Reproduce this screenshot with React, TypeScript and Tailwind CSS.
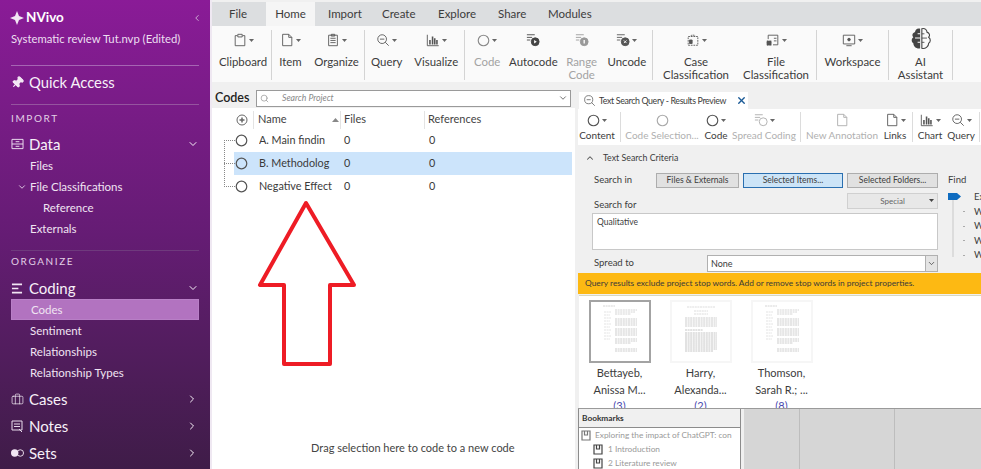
import React from "react";
import { ChevronDown, ChevronRight, ChevronLeft, ChevronUp, Pin, X, Search, Briefcase } from "lucide-react";

const G = ({ w = 14, h = 14, vb = "0 0 16 16", c = "#555", children, sw = 1 }: any) => (
  <svg width={w} height={h} viewBox={vb} fill="none" stroke={c} strokeWidth={sw} className="shrink-0">{children}</svg>
);
const Caret = ({ c = "#666" }: any) => (
  <svg width="5" height="3" viewBox="0 0 5 3" className="ml-[2px] shrink-0"><path d="M0 0h5L2.5 3z" fill={c} /></svg>
);
const ClipIcon = ({ c = "#555" }: any) => <G c={c}><path d="M5 3H2.500v11.500h11V3H11M5.500 1.500h5V4.500h-5z" /></G>;
const FileIcon = ({ c = "#555" }: any) => <G c={c}><path d="M3 1.500h7l3.500 3.500v9.500H3zM10 1.500V5h3.500" /></G>;
const OrgIcon = ({ c = "#555" }: any) => <G c={c}><path d="M3 2.500h10v12H3zM6 1.500h4v2H6zM5 6h6M5 8.500h6M5 11h6" /></G>;
const QueryIcon = ({ c = "#555", s = 14 }: any) => <G w={s} h={s} c={c}><circle cx="7" cy="7" r="5" /><path d="M10.500 10.500l4 4M4.500 7h5" /></G>;
const ChartIcon = ({ c = "#555" }: any) => <G c={c}><path d="M1.500 2v12.500h13" /><path d="M4.500 8v5M7.500 4v9M10 6v7M12.500 8v5" strokeWidth="1.800" /></G>;
const Ring = ({ c = "#666", s = 13, sw = 1.400 }: any) => <G w={s} h={s} c={c} sw={sw}><circle cx="8" cy="8" r="6.500" /></G>;
const CodeLines = ({ c = "#555", kind = "play" }: any) => (
  <svg width="14" height="14" viewBox="0 0 16 16" fill="none" stroke={c} className="shrink-0">
    <path d="M1 2h9M1 5h6M1 8h4" />
    <circle cx="10.500" cy="10" r="4.500" fill={kind === "none" ? "none" : c} />
    {kind === "play" && <path d="M9.300 8l3 2-3 2z" fill="#fff" stroke="none" />}
    {kind === "x" && <path d="M9 8.500l3 3M12 8.500l-3 3" stroke="#fff" />}
    {kind === "pause" && <path d="M10.500 8v4" stroke="#fff" strokeWidth="1.500" />}
  </svg>
);
const CaseIcon = () => <G><path d="M6 4V2.500h4V4M2.500 4h11v10h-11z" strokeDasharray="2 1" /><path d="M4 8h3v4H4z" fill="#555" /></G>;
const FileClsIcon = () => <G><path d="M2.500 7V2.500h11v11H8M9 6h3M9 9h3" /><path d="M1 9h5v5H1z" fill="#555" strokeDasharray="1 1" /></G>;
const WorkIcon = () => <G><path d="M1.500 2.500h13v10h-13zM5 14.500h6" /><circle cx="8" cy="7.500" r="1.500" fill="#555" /></G>;
const Brain = () => (
  <svg width="22" height="23" viewBox="0 0 24 27" fill="none" className="shrink-0 -mt-[4px]">
    <path d="M11 2C7 1 5 4 5 6 2 7 1 10 3 12 0 14 1 18 3 19 3 23 7 26 11 25z" fill="#444" />
    <path d="M8 8h3M5 13h6M8 18h3" stroke="#fff" strokeWidth="1.200" />
    <path d="M13 2c4-1 6 2 6 4 3 1 4 4 2 6 3 2 2 6 0 7 0 4-4 7-8 6z" stroke="#444" strokeWidth="1.300" />
    <path d="M13 8h3M13 13h6M13 18h3" stroke="#444" />
  </svg>
);

const Rb = ({ w, icon, caret = true, l1, l2, off = false }: any) => (
  <div className={`flex flex-col items-center shrink-0 ${w}`}>
    <div className="h-[20px] shrink-0 flex items-center justify-center">{icon}{caret && <Caret />}</div>
    <div className={`mt-[5px] shrink-0 text-[11.400px] leading-[13px] text-center whitespace-nowrap ${off ? "text-[#a3a3a3]" : "text-[#3c3c3c]"}`}>{l1}</div>
    {l2 && <div className={`shrink-0 text-[11.400px] leading-[13px] text-center whitespace-nowrap ${off ? "text-[#a3a3a3]" : "text-[#3c3c3c]"}`}>{l2}</div>}
  </div>
);
const Gp = ({ w, pl = "", children }: any) => (
  <div className={`${w} ${pl} h-[50px] flex justify-around border-r border-[#d4d4d4] shrink-0`}>{children}</div>
);

const Sub = ({ children, pl = "pl-[19px]", active = false }: any) => (
  <div className={`h-[21px] flex items-center text-[11.500px] text-[#f0e4f2] ${pl} ${active ? "bg-[#b273c0] border border-[#b87fc6]" : ""}`}>{children}</div>
);
const Head = ({ icon, label, chev }: any) => (
  <div className="h-[22px] flex items-center text-[#f7f0f8] text-[15px]">
    <span className="w-[18px] flex items-center">{icon}</span>
    <span>{label}</span>
    {chev === "down" && <ChevronDown size={12} className="ml-auto" />}
    {chev === "right" && <ChevronRight size={12} className="ml-auto mr-[1px]" />}
  </div>
);
const Caps = ({ children }: any) => <div className="text-[10px] tracking-[1.600px] text-[#e2d0e6] leading-[12px]">{children}</div>;

const Sidebar = () => (
  <aside className="w-[210px] h-[469px] shrink-0 overflow-hidden bg-gradient-to-b from-[#8a1b97] via-[#651c74] to-[#3f1c48] px-[11px] pt-[10px]">
    <div className="flex items-center h-[15px] text-white text-[13.500px] font-bold w-[188px]">
      <svg width="14" height="14" viewBox="0 0 14 14" className="mr-[2px] -ml-[1px]"><path d="M7 0l2 5 5 2-5 2-2 5-2-5-5-2 5-2z" fill="#f2e6f4" /></svg>
      NVivo
      <ChevronLeft size={10} className="ml-auto -mr-[3px] text-[#d9c5dd]" />
    </div>
    <div className="mt-[7px] text-[11.300px] leading-[14px] text-[#ecdff0] whitespace-nowrap">Systematic review Tut.nvp (Edited)</div>
    <div className="mt-[19px] border-t border-[#a665b3] w-[188px]" />
    <div className="h-[33px] flex items-center text-[14.800px] text-[#f7f0f8]">
      <Pin size={13} fill="#f2e6f4" className="rotate-45 mr-[5px]" />Quick Access
    </div>
    <div className="mt-[5px] border-t border-[#95549f] w-[188px]" />
    <div className="mt-[7px]"><Caps>IMPORT</Caps></div>
    <div className="mt-[9px] w-[188px]">
      <Head label="Data" chev="down" icon={<G w={13} h={12} vb="0 0 14 13" c="#f2e6f4"><path d="M1 1.500h12v10H1zM1 6.500h12M5 4h4M5 9h4" /></G>} />
      <Sub>Files</Sub>
      <Sub pl="pl-[6px]"><ChevronDown size={10} className="mr-[3px]" />File Classifications</Sub>
      <Sub pl="pl-[32px]">Reference</Sub>
      <Sub>Externals</Sub>
    </div>
    <div className="mt-[11px] border-t border-[#6f3a7d] w-[188px]" />
    <div className="mt-[4px]"><Caps>ORGANIZE</Caps></div>
    <div className="mt-[10px] w-[188px]">
      <Head label="Coding" chev="down" icon={<G w={12} h={11} vb="0 0 13 12" c="#f2e6f4" sw={1.700}><path d="M1 1.500h11M1 6h7M1 10.500h11" /></G>} />
      <Sub active>Codes</Sub>
      <Sub>Sentiment</Sub>
      <Sub>Relationships</Sub>
      <Sub>Relationship Types</Sub>
      <div className="mt-[5px]"><Head label="Cases" chev="right" icon={<Briefcase size={13} strokeWidth={1.300} />} /></div>
      <div className="mt-[5px]"><Head label="Notes" chev="right" icon={<G w={13} h={14} vb="0 0 13 14" c="#e8dbec"><path d="M1 2h10v9H1zM3 5h6M3 7.500h6M8 10l3 3" /></G>} /></div>
      <div className="mt-[5px]"><Head label="Sets" chev="right" icon={<svg width="13" height="8" viewBox="0 0 14 8"><circle cx="4" cy="4" r="4" fill="#f2e6f4" /><circle cx="10" cy="4" r="3.500" fill="none" stroke="#f2e6f4" /></svg>} /></div>
    </div>
  </aside>
);

const Ribbon = () => (
  <div className="shrink-0">
    <div className="mt-[2px] h-[24px] bg-[#dcdee0] flex items-end pl-[17px] text-[11.500px] text-[#3c3c3c]">
      <div className="w-[28px] h-[24px] flex items-center">File</div>
      <div className="ml-[9px] w-[49px] h-[24px] bg-[#f5f5f5] flex items-center justify-center">Home</div>
      <div className="ml-[13px] w-[54px] h-[24px] flex items-center">Import</div>
      <div className="w-[56px] h-[24px] flex items-center">Create</div>
      <div className="w-[60px] h-[24px] flex items-center">Explore</div>
      <div className="w-[50px] h-[24px] flex items-center">Share</div>
      <div className="h-[24px] flex items-center">Modules</div>
    </div>
    <div className="h-[56px] bg-[#fafafa] flex pt-[4px] pl-[2px]">
      <Gp w="w-[58px]"><Rb w="w-[58px]" icon={<ClipIcon />} l1="Clipboard" /></Gp>
      <Gp w="w-[93px]"><Rb w="w-[30px]" icon={<FileIcon />} l1="Item" /><Rb w="w-[48px]" icon={<OrgIcon />} l1="Organize" /></Gp>
      <Gp w="w-[100px]"><Rb w="w-[36px]" icon={<QueryIcon />} l1="Query" /><Rb w="w-[48px]" icon={<ChartIcon />} l1="Visualize" /></Gp>
      <Gp w="w-[188px]" pl="pl-[4px]">
        <Rb w="w-[30px]" off icon={<Ring c="#8a8a8a" />} l1="Code" />
        <Rb w="w-[50px]" caret={false} icon={<CodeLines c="#444" />} l1="Autocode" />
        <Rb w="w-[34px]" off caret={false} icon={<CodeLines c="#999" kind="pause" />} l1="Range" l2="Code" />
        <Rb w="w-[44px]" icon={<CodeLines c="#555" kind="x" />} l1="Uncode" />
      </Gp>
      <Gp w="w-[164px]" pl="pl-[3px]">
        <Rb w="w-[68px]" icon={<CaseIcon />} l1="Case" l2="Classification" />
        <Rb w="w-[68px]" icon={<FileClsIcon />} l1="File" l2="Classification" />
      </Gp>
      <Gp w="w-[72px]"><Rb w="w-[58px]" icon={<WorkIcon />} l1="Workspace" /></Gp>
      <Gp w="w-[64px]"><Rb w="w-[50px]" caret={false} icon={<Brain />} l1="AI" l2="Assistant" /></Gp>
    </div>
  </div>
);

const Row = ({ name, sel }: any) => (
  <div className={`h-[23px] flex items-center text-[10.800px] text-[#3a3a3a] ${sel ? "bg-[#cce4fb]" : ""} pl-[1px]`}>
    <Ring c="#555" s={13} sw={1.500} />
    <span className="ml-[11px] w-[84px] overflow-hidden whitespace-nowrap">{name}</span>
    <span className="w-[86px] pl-[1px]">0</span>
    <span>0</span>
  </div>
);

const CodesPanel = () => (
  <section className="w-[363px] shrink-0 flex flex-col h-[387px]">
    <div className="h-[26px] pt-[6px] flex items-center shrink-0">
      <span className="w-[44px] pl-[3px] text-[12.500px] font-semibold text-[#222]">Codes</span>
      <div className="w-[315px] h-[17px] bg-white border border-[#9a9a9a] flex items-center pl-[3px] text-[8.700px] italic text-[#888]">
        <Search size={9} className="text-[#999]" />
        <span className="ml-[13px]">Search Project</span>
        <ChevronDown size={10} className="ml-auto mr-[2px] text-[#555]" />
      </div>
    </div>
    <div className="flex-1 bg-white relative">
      <div className="h-[21px] pt-[2px] flex items-center text-[11px] text-[#444]">
        <div className="w-[41px] flex justify-end pr-[5px] shrink-0">
          <G w={12} h={12} vb="0 0 12 12" c="#666"><circle cx="6" cy="6" r="5" /><path d="M6 3.500v5M3.500 6h5" strokeWidth="1.500" /></G>
        </div>
        <div className="h-[18px] w-[87px] border-l border-[#e3e3e3] pl-[4px] flex items-center shrink-0">Name
          <svg width="7" height="4" viewBox="0 0 7 4" className="ml-auto mr-[1px]"><path d="M0 4h7L3.500 0z" fill="#888" /></svg>
        </div>
        <div className="h-[18px] w-[84px] border-l border-[#e3e3e3] pl-[3px] flex items-center shrink-0">Files</div>
        <div className="h-[18px] border-l border-[#e3e3e3] pl-[3px] flex items-center">References</div>
      </div>
      <div className="ml-[22px] mr-[3px]">
        <Row name="A. Main findin" />
        <Row name="B. Methodolog" sel />
        <Row name="Negative Effect" />
      </div>
      <div className="absolute left-[12px] top-[32px] w-[11px] h-[47px] border-l border-dotted border-[#888]" />
      <div className="absolute left-[12px] top-[32px] w-[11px] border-t border-dotted border-[#888]" />
      <div className="absolute left-[12px] top-[55px] w-[11px] border-t border-dotted border-[#888]" />
      <div className="absolute left-[12px] top-[78px] w-[11px] border-t border-dotted border-[#888]" />
      <div className="absolute bottom-[13px] left-[99px] text-[11px] leading-[16px] text-[#444] whitespace-nowrap">Drag selection here to code to a new code</div>
      <svg width="100" height="168" viewBox="0 0 100 168" fill="none" className="absolute left-[45px] top-[92px]">
        <path d="M49 3L3 85h24v79h46V85h24z" stroke="#ee1c25" strokeWidth="4" strokeLinejoin="round" />
      </svg>
    </div>
  </section>
);

const Tb = ({ w, icon, label, off, caret = true }: any) => (
  <div className={`flex flex-col items-center shrink-0 ${w}`}>
    <div className="h-[16px] flex items-center">{icon}{caret && <Caret />}</div>
    <div className={`text-[10px] leading-[14px] whitespace-nowrap ${off ? "text-[#b0b0b0]" : "text-[#3c3c3c]"}`}>{label}</div>
  </div>
);
const Sep = () => <div className="w-px h-[30px] bg-[#dcdcdc] shrink-0" />;
const Btn = ({ w, label, sel }: any) => (
  <div className={`${w} h-[15px] flex items-center justify-center text-[8.500px] text-[#3c3c3c] border ${sel ? "bg-[#cce4f7] border-[#2a6fb0]" : "bg-[#e1e1e1] border-[#adadad]"}`}>{label}</div>
);

const Thumb = ({ a, b, n, sel, dense }: any) => (
  <div className="w-[81px] flex flex-col items-center shrink-0">
    <div className={`w-[62px] h-[63px] bg-white border-[2px] shrink-0 ${sel ? "border-[#a3a3a3]" : "border-[#f6f6f6]"}`}>
      {dense ? (
        <svg width="58" height="59" viewBox="0 0 58 59" fill="none" strokeWidth="0.500" strokeDasharray="2 0.600">
          <path d="M15 5h28M22 9h14M22 12h14" stroke="#bbb" />
          <path d="M13 16h32M13 18h32M13 20h32M13 22h32M13 24h32" stroke="#999" />
          <path d="M13 28h18M13 31h32M13 33h32M13 35h32M13 37h32M13 39h32M13 41h32M13 43h32M13 45h32M13 47h32M13 49h28" stroke="#888" />
        </svg>
      ) : (
        <svg width="58" height="59" viewBox="0 0 58 59" fill="none" strokeWidth="0.500" strokeDasharray="2 0.600">
          <path d="M12 4h12M24 8h22M24 10h20M24 12h16" stroke="#aaa" />
          <path d="M13 10h7M13 13h6M13 16h7M13 19h6M13 22h7M13 25h6M13 28h7M13 31h6M13 34h7M13 37h6" stroke="#c4c4c4" />
          <path d="M24 17h22M24 19h22M24 21h22M24 23h22M24 27h22M24 29h22M24 31h22M24 33h22M24 37h22M24 39h22M24 41h16M24 47h22M24 49h22" stroke="#999" />
        </svg>
      )}
    </div>
    <div className="mt-[2px] text-[11px] leading-[16.500px] text-[#3c3c3c] text-center whitespace-nowrap">{a}</div>
    <div className="text-[11px] leading-[16.500px] text-[#3c3c3c] text-center whitespace-nowrap">{b}</div>
    <div className="text-[11px] leading-[16.500px] text-[#4a4ab0] text-center">{n}</div>
  </div>
);
const Bm = ({ t, ind }: any) => (
  <div className={`h-[14px] flex items-center text-[8.300px] text-[#999] whitespace-nowrap ${ind ? "pl-[14px]" : "pl-[2px]"}`}>
    <G w={10} h={11} vb="0 0 10 11" c={ind ? "#444" : "#777"} sw={1.200}><path d="M1 1h8v9H1zM3.500 1v4h3V1" /></G>
    <span className={ind ? "ml-[5px]" : "ml-[4px]"}>{t}</span>
  </div>
);

const RightPanel = () => (
  <section className="ml-[3px] flex-1 min-w-0 flex flex-col h-[387px] overflow-hidden">
    <div className="h-[10px] shrink-0" />
    <div className="h-[17px] w-[169px] ml-[1px] bg-white flex items-center pl-[4px] shrink-0 text-[8.800px] tracking-[-0.350px] text-[#3c3c3c] whitespace-nowrap">
      <QueryIcon c="#666" s={13} />
      <span className="ml-[3px]">Text Search Query - Results Preview</span>
      <X size={11} strokeWidth={3} className="ml-auto mr-[1px] text-[#1a5a96]" />
    </div>
    <div className="h-[36px] bg-white flex items-start pt-[3px] shrink-0">
      <Tb w="w-[38px]" icon={<Ring c="#555" s={13} />} label="Content" />
      <div className="w-[4px] shrink-0" /><Sep />
      <Tb w="w-[82px]" off caret={false} icon={<Ring c="#aaa" s={13} />} label="Code Selection..." />
      <Tb w="w-[26px]" icon={<Ring c="#555" s={13} />} label="Code" />
      <Tb w="w-[70px]" off icon={<CodeLines c="#aaa" kind="none" />} label="Spread Coding" />
      <div className="w-[1px] shrink-0" /><Sep />
      <Tb w="w-[82px]" off caret={false} icon={<FileIcon c="#aaa" />} label="New Annotation" />
      <Tb w="w-[24px]" icon={<FileIcon />} label="Links" />
      <div className="w-[5px] shrink-0" /><Sep />
      <Tb w="w-[34px]" icon={<ChartIcon />} label="Chart" />
      <Tb w="w-[28px]" icon={<QueryIcon />} label="Query" />
      <div className="w-[4px] shrink-0" /><Sep />
    </div>
    <div className="flex-1 min-h-0 flex flex-col">
      <div className="h-[128px] shrink-0 bg-[#f0f0f0] pl-[16px] text-[9.500px] text-[#3c3c3c] relative">
        <div className="h-[25px] flex items-center text-[8.800px] -ml-[9px]"><ChevronUp size={10} strokeWidth={2.500} className="mr-[8px] text-[#555]" />Text Search Criteria</div>
        <div className="h-[20px] flex items-center">
          <span className="w-[62px]">Search in</span>
          <Btn w="w-[83px]" label="Files & Externals" />
          <div className="w-[4px]" />
          <Btn w="w-[100px]" label="Selected Items..." sel />
          <div className="w-[4px]" />
          <Btn w="w-[91px]" label="Selected Folders..." />
          <span className="ml-[10px]">Find</span>
        </div>
        <div className="h-[16px] mt-[3px] ml-[253px] w-[91px] bg-[#e8e8e8] border border-[#d0d0d0] flex items-center justify-center relative text-[#666] text-[8px]">Special
          <svg width="5" height="3" viewBox="0 0 5 3" className="absolute right-[3px] top-[5px]"><path d="M0 0h5L2.500 3z" fill="#444" /></svg>
        </div>
        <div className="h-[0px] relative -top-[11px]">Search for</div>
        <div className="mt-[4px] -ml-[2px] w-[346px] h-[37px] bg-white border border-[#c8c8c8] pl-[4px] pt-[2px] text-[8.500px]">Qualitative</div>
        <div className="h-[17px] mt-[5px] flex items-center">
          <span className="w-[113px]">Spread to</span>
          <div className="w-[231px] h-[17px] bg-white border border-[#b0b0b0] flex items-center pl-[3px] text-[9px]">None
            <div className="ml-auto w-[12px] h-[15px] bg-[#e4e4e4] border-l border-[#b0b0b0] flex items-center justify-center"><ChevronDown size={9} /></div>
          </div>
        </div>
        <div className="absolute left-[370px] top-[48px] w-[14px] h-[70px]">
          <svg width="14" height="8" viewBox="0 0 14 8" className="absolute left-0 top-0"><path d="M0 0h9l4 3.500-4 3.500H0z" fill="#0f6cc0" /></svg>
          <div className="absolute left-[4px] top-[7px] w-[2px] h-[57px] bg-[#dcdcdc]" />
          <div className="absolute left-[15px] top-[18px] w-[2px] h-px bg-[#aaa]" />
          <div className="absolute left-[15px] top-[33px] w-[2px] h-px bg-[#aaa]" />
          <div className="absolute left-[15px] top-[47px] w-[2px] h-px bg-[#aaa]" />
          <div className="absolute left-[15px] top-[62px] w-[2px] h-px bg-[#aaa]" />
        </div>
        <div className="absolute left-[396px] top-[45px] flex flex-col text-[#3c3c3c] leading-[14.500px]">
          <span>Ex</span><span>W</span><span>W</span><span>W</span><span>W</span>
        </div>
      </div>
      <div className="h-[21px] shrink-0 bg-[#fdb913] pl-[7px] flex items-center text-[8.400px] text-[#3a3a3a] whitespace-nowrap">Query results exclude project stop words. Add or remove stop words in project properties.</div>
      <div className="h-[113px] shrink-0 mt-[1px] ml-[1px] bg-white border-t border-[#d8d8c0] flex pt-[4px] overflow-hidden">
        <Thumb a="Bettayeb," b="Anissa M..." n="(3)" sel />
        <Thumb a="Harry," b="Alexanda..." n="(2)" dense />
        <Thumb a="Thomson," b="Sarah R.; ..." n="(8)" />
      </div>
      <div className="flex-1 min-h-0 flex border-t border-[#9a9a9a]">
        <div className="w-[163px] shrink-0 bg-white border-x border-[#8c8c8c]">
          <div className="h-[19px] bg-[#f0f0f0] border-b border-[#8c8c8c] flex items-center pl-[3px] text-[8.300px] font-bold text-[#333]">Bookmarks</div>
          <Bm t="Exploring the impact of ChatGPT: con" />
          <Bm t="1 Introduction" ind />
          <Bm t="2 Literature review" ind />
        </div>
        <div className="w-[3px] shrink-0" />
        <div className="flex-1 bg-[#d6d6d6] flex pl-[55px]">
          <div className="w-[95px] border-l border-[#bdbdbd]" />
          <div className="border-l border-[#bdbdbd]" />
        </div>
      </div>
    </div>
  </section>
);

export default function App() {
  return (
    <div className="w-[981px] h-[469px] flex overflow-hidden bg-[#f0f0f0] font-['Lato',sans-serif]">
      <Sidebar />
      <main className="flex-1 min-w-0 flex flex-col border-l-2 border-[#efe8f2]">
        <Ribbon />
        <div className="flex">
          <CodesPanel />
          <RightPanel />
        </div>
      </main>
    </div>
  );
}
